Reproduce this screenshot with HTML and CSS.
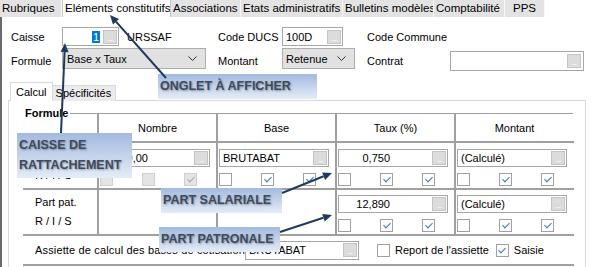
FILE: index.html
```html
<!DOCTYPE html>
<html lang="fr">
<head>
    <meta charset="UTF-8" />
    <title>Rubrique – Eléments constitutifs</title>
    <link rel="stylesheet" href="styles.css">
</head>
<body>
<div class="tabs">
    <span class="tab w-rub">Rubriques</span>
    <span class="tab tab-on w-ele">Eléments constitutifs</span>
    <span class="tab w-ass">Associations</span>
    <span class="tab w-eta">Etats administratifs</span>
    <span class="tab w-bul">Bulletins modèles</span>
    <span class="tab w-cpt">Comptabilité</span>
    <span class="tab w-pps">PPS</span>
</div>

<div class="page">
    <div class="form">
        <span class="lbl">Caisse</span>
        <div class="field">
            <span class="input caisse"><span class="val"><span class="sel">1</span></span><span class="dots">...</span></span>
            <span class="org">URSSAF</span>
        </div>
        <span class="lbl">Code DUCS</span>
        <div class="field">
            <span class="input ducs"><span class="val">100D</span><span class="dots">...</span></span>
        </div>
        <span class="lbl">Code Commune</span>
        <div></div>

        <span class="lbl low">Formule</span>
        <div class="field">
            <span class="select formule">Base x Taux<svg width="9" height="5"><polyline points="0.5,0.5 4.5,4.5 8.5,0.5" /></svg></span>
        </div>
        <span class="lbl low">Montant</span>
        <div class="field">
            <span class="select retenue">Retenue<svg width="9" height="5"><polyline points="0.5,0.5 4.5,4.5 8.5,0.5" /></svg></span>
        </div>
        <span class="lbl low">Contrat</span>
        <div class="field">
            <span class="input contrat"><span class="val"></span><span class="dots">...</span></span>
        </div>
    </div>

    <div class="subtabs">
        <span class="st st-on">Calcul</span>
        <span class="st">Spécificités</span>
    </div>

    <div class="panel">
        <div class="grid">
            <div class="row head">
                <div class="cell label"><div class="legend">Formule</div></div>
                <div class="cell">Nombre</div>
                <div class="cell">Base</div>
                <div class="cell">Taux (%)</div>
                <div class="cell">Montant</div>
            </div>

            <div class="row part r1">
                <div class="cell label"><div>Part sal.</div><div>R / I / S</div></div>
                <div class="cell">
                    <span class="input num nombre"><span class="val">0,00</span><span class="dots">...</span></span>
                    <div class="checks"><span class="cb off"></span><span class="cb off"></span><span class="cb off on"></span></div>
                </div>
                <div class="cell">
                    <span class="input"><span class="val">BRUTABAT</span><span class="dots">...</span></span>
                    <div class="checks"><span class="cb"></span><span class="cb on"></span><span class="cb on"></span></div>
                </div>
                <div class="cell">
                    <span class="input num"><span class="val">0,750</span><span class="dots">...</span></span>
                    <div class="checks"><span class="cb"></span><span class="cb on"></span><span class="cb on"></span></div>
                </div>
                <div class="cell">
                    <span class="input"><span class="val">(Calculé)</span><span class="dots">...</span></span>
                    <div class="checks"><span class="cb"></span><span class="cb on"></span><span class="cb on"></span></div>
                </div>
            </div>

            <div class="row part r2">
                <div class="cell label"><div>Part pat.</div><div>R / I / S</div></div>
                <div class="cell"></div>
                <div class="cell"></div>
                <div class="cell">
                    <span class="input num"><span class="val">12,890</span><span class="dots">...</span></span>
                    <div class="checks"><span class="cb"></span><span class="cb on"></span><span class="cb on"></span></div>
                </div>
                <div class="cell">
                    <span class="input"><span class="val">(Calculé)</span><span class="dots">...</span></span>
                    <div class="checks"><span class="cb"></span><span class="cb on"></span><span class="cb on"></span></div>
                </div>
            </div>

            <div class="row assiette">
                <span class="assiette-lbl">Assiette de calcul des bases de cotisation</span>
                <span class="input base"><span class="val">BRUTABAT</span><span class="dots">...</span></span>
                <span class="cb report"></span><span class="cb-text">Report de l'assiette</span>
                <span class="cb on saisie"></span><span class="cb-text">Saisie</span>
            </div>
        </div>
    </div>
</div>

<!-- annotations over the screenshot -->
<div class="notes">
    <div class="note n-onglet">ONGLET À AFFICHER</div>
    <div class="note n-caisse">CAISSE DE<br>RATTACHEMENT</div>
    <div class="note n-sal">PART SALARIALE</div>
    <div class="note n-pat">PART PATRONALE</div>
    <svg class="arrows" width="592" height="267">
        <line x1="166" y1="78" x2="116" y2="21.7" />
        <polygon points="110,15 119,19.1 113,24.4" />
        <line x1="61" y1="133" x2="64.6" y2="52" />
        <polygon points="65,43 68.6,52.2 60.6,51.8" />
        <line x1="282" y1="193" x2="323.6" y2="176.3" />
        <polygon points="332,173 325.1,180 322.2,172.6" />
        <line x1="280" y1="232" x2="323.4" y2="217.8" />
        <polygon points="332,215 324.7,221.6 322.2,214" />
    </svg>
</div>
</body>
</html>
```

FILE: styles.css
```css
body {
    margin: 0;
    width: 592px;
    height: 267px;
    overflow: hidden;
    position: relative;
    background: #fff;
    color: #000;
    font-family: "Liberation Sans", Arial, sans-serif;
    font-size: 11px;
}

/* top tabs */
.tabs {
    display: flex;
    height: 17px;
}
.tab {
    box-sizing: border-box;
    height: 17px;
    padding: 2px 0 0 2px;
    background: #e3e3e3;
    border-right: 1px solid #f7f7f7;
    font-size: 11.5px;
    line-height: 13px;
    white-space: nowrap;
    overflow: hidden;
}
.tab-on {
    background: #fff;
    border-left: 1px solid #c4c4c4;
    border-right: 1px solid #c4c4c4;
}
.w-rub { width: 62px; }
.w-ele { width: 109px; }
.w-ass { width: 70px; }
.w-eta { width: 102px; }
.w-bul { width: 91px; }
.w-cpt { width: 71px; }
.w-pps { width: 40px; text-align: center; padding-left: 0; }

.page {
    box-sizing: border-box;
    border-left: 2px solid #6a6a6a;
    padding: 10px 0 0 6px;
    height: 250px;
}

/* header fields */
.form {
    display: grid;
    grid-template-columns: 51px 156px 64px 85px 83px 134px;
    grid-template-rows: 19px 21px;
    row-gap: 2px;
    padding-left: 3px;
}
.lbl {
    align-self: center;
    white-space: nowrap;
}
.lbl.low {
    padding-top: 4px;
}
.field {
    display: flex;
    align-items: flex-start;
}
.org {
    margin: 4px 0 0 8px;
}

.input {
    box-sizing: border-box;
    display: flex;
    align-items: center;
    width: 110px;
    height: 18px;
    border: 1px solid #a6a6a6;
    background: #fff;
}
.input .val {
    flex: 1;
    padding-left: 3px;
    white-space: nowrap;
    overflow: hidden;
}
.dots {
    box-sizing: border-box;
    width: 14px;
    height: 14px;
    margin-right: 1px;
    background: #dcdcdc;
    border: 1px solid #c4c4c4;
    color: #fff;
    font-size: 9px;
    line-height: 15px;
    text-align: center;
    letter-spacing: -1px;
}
.caisse {
    width: 57px;
    height: 19px;
}
.caisse .val {
    text-align: right;
    padding-right: 3px;
}
.sel {
    background: #0078d7;
    color: #fff;
    padding: 0 1px;
}
.ducs {
    width: 61px;
    height: 19px;
}
.contrat {
    width: 134px;
    height: 20px;
    margin-top: 3px;
}
.contrat .dots {
    margin-right: 2px;
}

.select {
    box-sizing: border-box;
    display: flex;
    align-items: center;
    justify-content: space-between;
    height: 21px;
    padding: 0 8px 0 4px;
    background: #e1e1e1;
    border: 1px solid #adadad;
}
.select svg polyline {
    fill: none;
    stroke: #333;
    stroke-width: 1;
}
.formule { width: 144px; }
.retenue { width: 73px; padding-left: 3px; }

/* sub tabs */
.subtabs {
    display: flex;
    align-items: flex-end;
    margin: 13px 0 -1px 2px;
}
.st {
    box-sizing: border-box;
    height: 16px;
    padding: 1px 4px 0 3px;
    background: #ebebeb;
    border: 1px solid #d9d9d9;
    border-bottom: none;
    border-left: none;
}
.st-on {
    height: 19px;
    padding: 3px 5px 0 5px;
    background: #fff;
    border-left: 1px solid #d9d9d9;
}

.panel {
    box-sizing: border-box;
    width: 578px;
    height: 168px;
    border: 1px solid #d9d9d9;
    padding: 12px 0 0 14px;
}

/* formule grid */
.grid {
    width: 551px;
}
.row {
    display: grid;
    grid-template-columns: 74px repeat(4, 119px);
    border-bottom: 2px solid #a0a0a0;
}
.cell {
    box-sizing: border-box;
    border-left: 2px solid #a0a0a0;
}
.cell.label {
    border-left: none;
}
.head {
    height: 28px;
}
.head .cell {
    display: flex;
    align-items: center;
    justify-content: center;
    border-top: 1px solid #a0a0a0;
}
.head .cell.label {
    border-top: none;
    align-items: flex-start;
    justify-content: stretch;
}
.legend {
    display: flex;
    align-items: center;
    width: 100%;
    height: 14px;
    margin-top: -7px;
    padding-left: 2px;
    font-weight: bold;
}
.legend::after {
    content: "";
    flex: 1;
    margin: 1px 0 0 2px;
    border-top: 1px solid #a0a0a0;
}

.part .cell {
    padding: 6px 0 0 1px;
}
.part .cell.label {
    padding: 4px 0 0 12px;
    line-height: 19px;
}
.r1 { height: 45px; }
.r2 { height: 44px; }
.r2 .cell { padding-top: 5px; }
.r2 .cell.label { padding-top: 3px; }

.num .val {
    text-align: right;
    padding-right: 42px;
}
.nombre .val {
    padding-right: 46px;
}

.checks {
    display: flex;
    gap: 29px;
    margin-top: 6px;
}
.cb {
    box-sizing: border-box;
    display: flex;
    align-items: center;
    justify-content: center;
    width: 13px;
    height: 13px;
    border: 1px solid #a0a0a0;
    background: #fff;
}
.cb.on::after {
    content: "";
    width: 3px;
    height: 6px;
    margin-top: -2px;
    border-right: 1.5px solid #3b6fd4;
    border-bottom: 1.5px solid #3b6fd4;
    transform: rotate(45deg);
}
.cb.off {
    background: #e4e4e4;
    border-color: #cfcfcf;
}
.cb.off.on::after {
    border-color: #a8a8a8;
}

.assiette {
    display: flex;
    align-items: center;
    height: 30px;
    padding-left: 12px;
    box-sizing: border-box;
}
.assiette-lbl {
    width: 210px;
    white-space: nowrap;
    overflow: hidden;
    letter-spacing: 0.15px;
}
.base {
    width: 114px;
    height: 19px;
}
.report {
    margin-left: 18px;
}
.cb-text {
    margin-left: 5px;
}
.saisie {
    margin-left: 7px;
}

/* annotations */
.notes {
    position: absolute;
    left: 0;
    top: 0;
    width: 592px;
    height: 267px;
    pointer-events: none;
}
.note {
    position: absolute;
    box-sizing: border-box;
    padding-left: 2px;
    background: linear-gradient(#a3badf, #e5ecf7);
    color: #3e4b5e;
    font-size: 12.5px;
    font-weight: bold;
    line-height: 25px;
    white-space: nowrap;
    text-shadow: 1px 1px 2px rgba(0, 0, 0, 0.35);
}
.n-onglet { left: 158px; top: 74px; width: 159px; height: 25px; }
.n-caisse { left: 17px; top: 133px; width: 115px; height: 45px; line-height: 20px; padding-top: 2px; }
.n-sal { left: 161px; top: 188px; width: 121px; height: 25px; }
.n-pat { left: 159px; top: 227px; width: 121px; height: 25px; }

.arrows {
    position: absolute;
    left: 0;
    top: 0;
}
.arrows line {
    stroke: #1f3a60;
    stroke-width: 2;
}
.arrows polygon {
    fill: #1f3a60;
}
```
